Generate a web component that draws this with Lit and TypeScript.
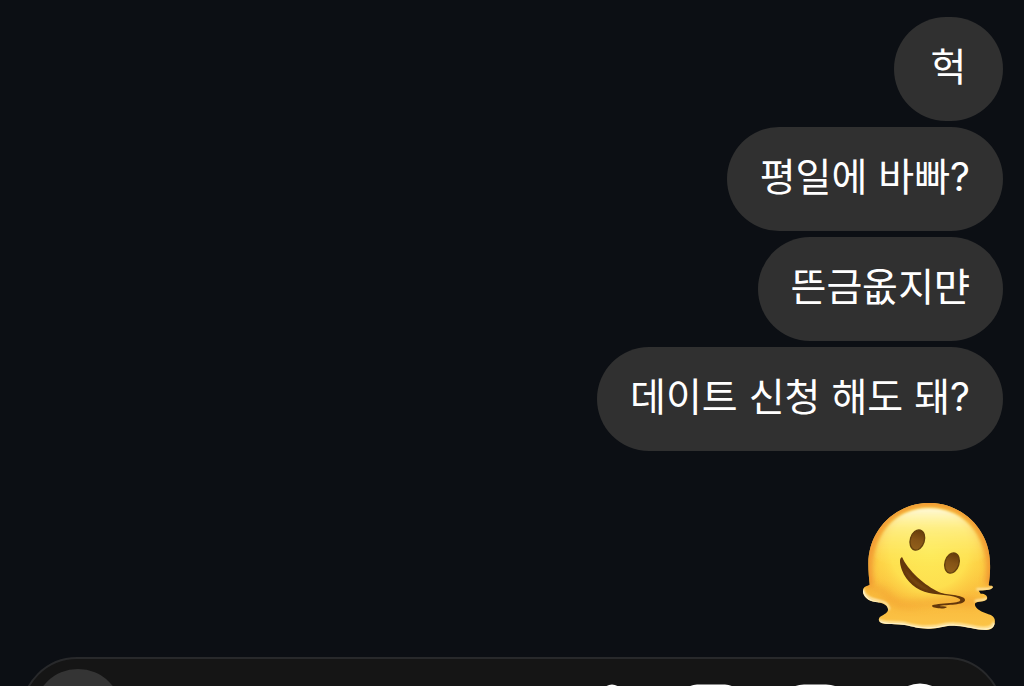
import { LitElement, html, css } from "lit";
import { customElement, property, state } from "lit/decorators.js";

@customElement("melting-face")
class MeltingFace extends LitElement {
  static styles = css`
    :host {
      display: block;
      width: 144px;
    }
    .face {
      display: block;
      width: 100%;
    }
  `;

  render() {
    return html`
      <svg class="face" viewBox="27 15 432 432" role="img" aria-label="녹아내리는 얼굴">
        <defs>
          <linearGradient id="skin" x1="0" y1="0" x2="0" y2="1">
            <stop offset="0" stop-color="#fbcb4a" />
            <stop offset="0.1" stop-color="#fddb58" />
            <stop offset="0.5" stop-color="#fdd045" />
            <stop offset="0.76" stop-color="#f9b93c" />
            <stop offset="1" stop-color="#fcc548" />
          </linearGradient>
          <radialGradient id="glow" gradientUnits="userSpaceOnUse" cx="238" cy="180" r="195">
            <stop offset="0" stop-color="#fdea58" />
            <stop offset="0.6" stop-color="#fee250" stop-opacity="0.9" />
            <stop offset="1" stop-color="#fcc33c" stop-opacity="0" />
          </radialGradient>
          <linearGradient id="shine" x1="0" y1="0" x2="0" y2="1">
            <stop offset="0" stop-color="#fffbe0" stop-opacity="0.95" />
            <stop offset="0.35" stop-color="#fff8b0" stop-opacity="0.5" />
            <stop offset="1" stop-color="#fff06a" stop-opacity="0" />
          </linearGradient>
          <linearGradient id="eye" x1="0" y1="0" x2="0" y2="1">
            <stop offset="0" stop-color="#663c0a" />
            <stop offset="0.5" stop-color="#855416" />
            <stop offset="1" stop-color="#92601b" />
          </linearGradient>
          <filter id="soft" filterUnits="userSpaceOnUse" x="0" y="0" width="480" height="460">
            <feGaussianBlur stdDeviation="9" />
          </filter>
          <filter id="fine" filterUnits="userSpaceOnUse" x="0" y="0" width="480" height="460">
            <feGaussianBlur stdDeviation="3" />
          </filter>
          <path
            id="body"
            d="M238 39C137 39 55 119 55 222C55 244 57 265 59 284C53 289 41 287 39 301C37 318 53 334 76 336C96 338 112 343 114 357C116 370 96 376 89 382C82 391 90 400 103 401C124 404 141 401 163 405C191 410 208 417 240 416C268 416 286 405 319 408C350 409 374 420 410 420C429 420 437 404 434 388C430 373 414 374 398 366C382 359 371 348 376 339C382 333 405 337 411 327C414 317 404 310 392 311L386 302C398 301 424 302 429 292C427 284 419 290 416 285C419 263 421 242 420 221C420 120 338 39 238 39Z"
          />
          <clipPath id="edge"><use href="#body" /></clipPath>
        </defs>
        <use href="#body" fill="url(#skin)" />
        <g clip-path="url(#edge)">
          <circle cx="238" cy="180" r="195" fill="url(#glow)" />
          <path
            d="M58 290C36 160 100 41 238 38C376 41 440 160 418 285"
            fill="none"
            stroke="#ee8c2e"
            stroke-width="26"
            opacity="0.9"
            filter="url(#soft)"
          />
          <path
            d="M55 295C120 290 110 345 175 345C255 340 300 326 378 340"
            fill="none"
            stroke="#f09a2f"
            stroke-width="26"
            opacity="0.4"
            filter="url(#soft)"
          />
          <path
            d="M39 298C43 322 65 329 88 333C112 338 114 346 117 357M88 391C107 402 141 394 166 400C206 412 232 413 262 408C306 398 325 401 358 408C393 416 426 419 431 398M382 298C398 298 422 299 428 292M377 333C389 329 406 333 409 325"
            fill="none"
            stroke="#fff0bc"
            stroke-width="6"
            stroke-linecap="round"
            filter="url(#fine)"
          />
          <path
            d="M39 302C45 326 62 334 88 338M88 395C111 404 140 400 166 404C206 416 232 417 262 412C306 402 325 405 358 412C393 420 428 424 434 400"
            fill="none"
            stroke="#fffbe3"
            stroke-width="5"
            opacity="0.7"
          />
        </g>
        <path
          d="M237 55C150 55 88 112 74 200C90 240 380 240 402 200C388 112 325 55 237 55Z"
          fill="url(#shine)"
          filter="url(#fine)"
        />
        <ellipse cx="202" cy="150" rx="21" ry="31" transform="rotate(17 202 150)" fill="url(#eye)" stroke="#64400d" stroke-width="4" />
        <ellipse cx="306" cy="219" rx="21" ry="31" transform="rotate(17 306 219)" fill="url(#eye)" stroke="#64400d" stroke-width="4" />
        <path
          d="M155 202C146 207 151 226 156 241C169 275 200 302 237 309C268 315 310 315 328 326C337 332 324 337 309 338C286 340 258 341 247 346C243 350 253 354 265 355C275 356 286 356 291 351C284 348 274 350 268 348C288 343 347 346 345 329C343 315 296 315 274 309C236 295 180 249 159 207C158 204 157 202 155 202Z"
          fill="#64370b"
        />
        <path
          d="M160 229C177 261 214 287 244 302C209 298 176 273 160 229Z"
          fill="#7a4912"
          filter="url(#fine)"
        />
      </svg>
    `;
  }
}

@customElement("chat-bubble")
class ChatBubble extends LitElement {
  @property() text = "";

  static styles = css`
    :host {
      display: block;
      max-width: 80%;
    }
    .bubble {
      box-sizing: border-box;
      min-width: 109px;
      margin: 0;
      padding: 20px 33px 24px;
      border-radius: 52px;
      background: #303030;
      color: #fff;
      font-size: 39px;
      line-height: 60px;
      text-align: center;
      overflow-wrap: anywhere;
    }
  `;

  render() {
    return html`<p class="bubble">${this.text}</p>`;
  }
}

@customElement("chat-composer")
class ChatComposer extends LitElement {
  static styles = css`
    :host {
      display: block;
    }
    .bar {
      display: flex;
      align-items: center;
      box-sizing: border-box;
      height: 112px;
      padding: 0 41px 0 11px;
      border: 2px solid #28292b;
      border-radius: 56px;
      background: #151515;
    }
    .button {
      display: grid;
      place-items: center;
      flex: none;
      width: 80px;
      height: 80px;
      padding: 0;
      border: 0;
      border-radius: 50%;
      background: none;
      color: #fff;
    }
    .camera {
      width: 88px;
      height: 88px;
      background: #343434;
    }
    .field {
      flex: 1;
      min-width: 0;
      margin: 0 16px;
      border: 0;
      outline: 0;
      background: none;
      color: #fff;
      font: inherit;
      font-size: 39px;
    }
    .tools {
      display: flex;
      gap: 24px;
    }
    .icon {
      width: 60px;
      height: 60px;
      fill: none;
      stroke: currentColor;
      stroke-width: 5;
      stroke-linecap: round;
      stroke-linejoin: round;
    }
  `;

  render() {
    return html`
      <form class="bar" @submit=${(e: Event) => e.preventDefault()}>
        <button class="button camera" type="button" aria-label="카메라">
          <svg class="icon" viewBox="0 0 60 60">
            <path d="M8 19h10l5-7h14l5 7h10v30H8z" />
            <circle cx="30" cy="33" r="9" />
          </svg>
        </button>
        <input class="field" type="text" aria-label="메시지" />
        <div class="tools">
          <button class="button" type="button" aria-label="음성 메시지">
            <svg class="icon" viewBox="0 0 60 60">
              <rect x="26" y="4" width="16" height="32" rx="8" />
              <path d="M16 28c0 24 36 24 36 0M34 46v10" />
            </svg>
          </button>
          <button class="button" type="button" aria-label="사진">
            <svg class="icon" viewBox="0 0 60 60">
              <rect x="2" y="4" width="54" height="52" rx="13" />
              <path d="M5 46l16-16 24 25" />
              <circle cx="40" cy="20" r="4" />
            </svg>
          </button>
          <button class="button" type="button" aria-label="스티커">
            <svg class="icon" viewBox="0 0 60 60">
              <path d="M18 4h22q16 0 16 16v16L36 56H18Q3 56 3 40V20Q3 4 18 4zM36 56V46q0-10 10-10h10" />
            </svg>
          </button>
          <button class="button" type="button" aria-label="더 보기">
            <svg class="icon" viewBox="0 0 60 60">
              <circle cx="30" cy="30" r="27" />
              <path d="M30 18v24M18 30h24" />
            </svg>
          </button>
        </div>
      </form>
    `;
  }
}

@customElement("app-root")
class AppRoot extends LitElement {
  @state() private messages = ["헉", "평일에 바빠?", "뜬금\uC636지먄", "데이트 신청 해도 돼?"];

  static styles = css`
    :host {
      display: block;
      height: 100vh;
      overflow: hidden;
      background: #0c0f14;
      font-family: Inter, "Noto Sans CJK KR", sans-serif;
    }
    .chat {
      padding: 17px 21px 0;
    }
    .messages {
      display: flex;
      flex-direction: column;
      align-items: flex-end;
      gap: 6px;
      margin-bottom: 18px;
    }
    .sticker {
      margin-top: 38px;
    }
  `;

  render() {
    return html`
      <main class="chat" lang="ko">
        <section class="messages">
          ${this.messages.map((text) => html`<chat-bubble .text=${text}></chat-bubble>`)}
          <melting-face class="sticker"></melting-face>
        </section>
        <chat-composer></chat-composer>
      </main>
    `;
  }
}
